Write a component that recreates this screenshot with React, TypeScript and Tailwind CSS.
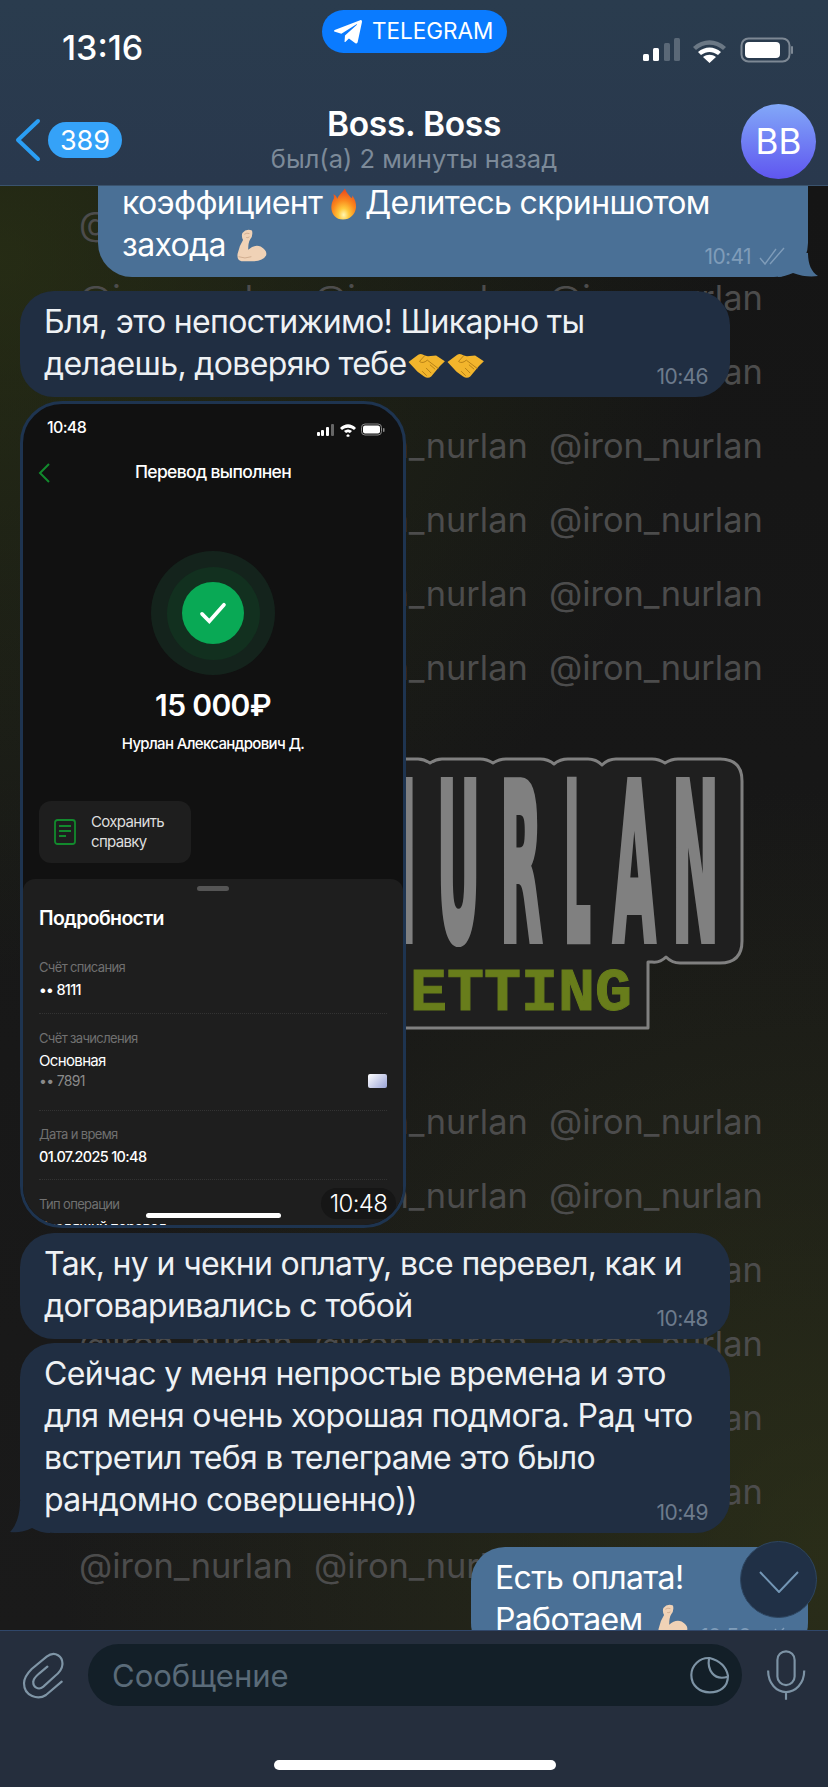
import { FaTelegramPlane } from "react-icons/fa";
import type { ReactNode } from "react";

function Flame() {
  return (
    <svg viewBox="35 15 80 98" className="inline-block h-[32px] w-[26px] align-[-6px]">
      <defs>
        <radialGradient id="flame" cx="0.5" cy="0.85" r="0.85">
          <stop offset="0" stopColor="#fff6b0" />
          <stop offset="0.25" stopColor="#ffc93c" />
          <stop offset="0.55" stopColor="#fb8a1e" />
          <stop offset="1" stopColor="#e8411c" />
        </radialGradient>
      </defs>
      <path d="M78 16c4 14 12 20 20 30 2-2 3-5 3-8 8 12 12 24 11 36-2 22-18 38-40 38S36 96 36 74c0-12 4-20 8-28 0-4 0-8-2-12 8 2 10 8 12 14 4-12 16-20 24-32z" fill="url(#flame)" />
    </svg>
  );
}

function Muscle({ className }: { className: string }) {
  return (
    <svg viewBox="28 15 100 105" className={className}>
      <path d="M48 30Q60 15 78 22 82 40 72 50 66 60 66 82 85 65 105 72 127 85 122 100 112 118 80 118L45 118Q30 115 33 95 38 70 50 52 44 40 48 30z" fill="#f0d2b6" />
      <path d="M54 34q8-6 16-2M60 44q5 2 10-2M36 104q20 8 40 0" stroke="#c9a487" strokeWidth="2.500" fill="none" />
    </svg>
  );
}

function Handshake() {
  return (
    <svg viewBox="0 0 114 80" className="ml-[1px] inline-block h-[26px] w-[38px] align-[-4px]">
      <path d="M0 28L30 5Q40 0 50 8L60 10 85 8 112 25 97 40 70 72Q60 80 48 72L28 58z" fill="#f2b52c" />
      <path d="M50 8L34 26Q44 34 58 22L92 48M42 56l14 14M54 46l16 16M66 36l16 14" stroke="#b67f16" strokeWidth="3" fill="none" />
    </svg>
  );
}

function Bubble({
  out,
  time,
  tail,
  className,
  children,
}: {
  out?: boolean;
  time: string;
  tail?: boolean;
  className: string;
  children: ReactNode;
}) {
  return (
    <div className={`relative rounded-[34px] ${out ? "bg-[#4a7096] text-white" : "bg-[#202e42] text-[#eef1f4]"} ${className}`}>
      {tail && out && (
        <svg viewBox="0 0 40 24" className="absolute right-[-10px] bottom-0 h-[24px] w-[40px]">
          <path d="M30 0C30 10 33 19 40 23 33 24 24 23.500 15 20 10 22 4 24 0 24L0 0z" fill="#4a7096" />
        </svg>
      )}
      {tail && !out && (
        <svg viewBox="0 0 40 32" className="absolute left-[-10px] bottom-0 h-[32px] w-[40px]">
          <path d="M10 0C10 12 7 24 0 31 7 32 14 31 22 27 27 30 34 32 40 32L40 0z" fill="#202e42" />
        </svg>
      )}
      <div className="relative">{children}</div>
      <div className={`absolute bottom-[8px] flex items-center gap-[8px] text-[21px] leading-[24px] tracking-[-0.6px] ${out ? "right-[23px] text-[#7f9cb9]" : "right-[22px] text-[#6d7b8c]"}`}>
        {time}
        {out && (
          <svg viewBox="0 0 26 20" className="h-[20px] w-[26px]" fill="none" stroke="#7f9cb9" strokeWidth="1.400">
            <path d="M1 11l5 6L17 2M11 17L25 1" />
          </svg>
        )}
      </div>
    </div>
  );
}

function Detail({ label, value, className }: { label: string; value: string; className: string }) {
  return (
    <div className={className}>
      <div className="text-[13px] leading-[18px] text-[#707070]">{label}</div>
      <div className="mt-[4px] text-[14.500px] leading-[20px] font-medium text-white">{value}</div>
    </div>
  );
}

function Dots() {
  return <div className="mx-[16px] border-t border-dotted border-[#333333]" />;
}

function PaymentShot() {
  return (
    <div className="relative ml-[20px] mt-[4px] h-[827px] w-[386px] shrink-0 overflow-hidden rounded-[42px] border-[3px] border-[#1e3450] bg-[#111111]">
      <div className="flex h-[34px] items-end justify-between pl-[24px] pr-[18px] pb-[1px]">
        <span className="text-[16px] leading-[20px] font-medium text-white">10:48</span>
        <svg viewBox="0 0 68 14" className="h-[14px] w-[68px]" fill="white">
          <rect x="0" y="9" width="3" height="4" rx="1" />
          <rect x="4" y="7" width="3" height="6" rx="1" />
          <rect x="9" y="4" width="3" height="9" rx="1" />
          <rect x="14" y="1" width="3" height="12" rx="1" fill="#666" />
          <path d="M23 5c5-5 11-5 16 0l-2 2c-4-3-8-3-12 0zM27 8c3-2 5-2 8 0l-2 2c-2-1-2-1-4 0zM31 11l2 2-2 1-2-1z" />
          <rect x="44.500" y="1" width="20" height="11" rx="3.500" fill="none" stroke="#888" />
          <rect x="46" y="2.500" width="17" height="8" rx="2" />
          <rect x="66" y="5" width="1.500" height="4" rx="0.700" fill="#888" />
        </svg>
      </div>
      <div className="relative mt-[23px] flex h-[22px] items-center justify-center text-[17.500px] font-medium text-white">
        <svg viewBox="0 0 12 20" className="absolute left-[15px] top-[2px] h-[20px] w-[12px]" fill="none" stroke="#128a2d" strokeWidth="2">
          <path d="M11 1L2 10l9 9" />
        </svg>
        Перевод выполнен
      </div>
      <div className="mt-[68px] flex justify-center">
        <div className="flex h-[124px] w-[124px] items-center justify-center rounded-full bg-[#14231c]">
          <div className="flex h-[93px] w-[93px] items-center justify-center rounded-full bg-[#12301f]">
            <div className="flex h-[62px] w-[62px] items-center justify-center rounded-full bg-[#09a955]">
              <svg viewBox="0 0 28 24" className="h-[22px] w-[28px]" fill="none" stroke="white" strokeWidth="4" strokeLinecap="round">
                <path d="M2 13l8 8L26 3" />
              </svg>
            </div>
          </div>
        </div>
      </div>
      <div className="mt-[11px] text-center text-[30px] leading-[38px] font-semibold text-white">15 000₽</div>
      <div className="mt-[10px] text-center text-[15px] leading-[20px] font-medium text-white">Нурлан Александрович Д.</div>
      <div className="mt-[47px] ml-[16px] flex h-[62px] w-[152px] items-center gap-[15px] rounded-[12px] bg-[#1e1e1e] pl-[15px]">
        <svg viewBox="0 0 22 26" className="h-[26px] w-[22px]" fill="none" stroke="#128a2d" strokeWidth="1.800">
          <rect x="1" y="1" width="20" height="24" rx="2.500" />
          <path d="M5 7h12M5 12h12M5 17h7" />
        </svg>
        <div className="text-[15px] leading-[20px] text-[#dddddd]">
          Сохранить
          <br />
          справку
        </div>
      </div>
      <div className="mt-[16px] h-[400px] rounded-t-[12px] bg-[#1e1e1e]">
        <div className="flex justify-center pt-[7px]">
          <div className="h-[5px] w-[32px] rounded-full bg-[#555555]" />
        </div>
        <div className="mt-[15px] px-[16px] text-[19.500px] leading-[24px] font-semibold text-white">Подробности</div>
        <Detail className="mt-[28px] px-[16px] pb-[13px]" label="Счёт списания" value="•• 8111" />
        <Dots />
        <div className="px-[16px] pt-[15px] pb-[19px]">
          <div className="text-[13px] leading-[18px] text-[#707070]">Счёт зачисления</div>
          <div className="mt-[4px] text-[15px] leading-[20px] text-white">Основная</div>
          <div className="flex items-center justify-between text-[14px] leading-[20px] text-[#8a8a8a]">
            •• 7891
            <div className="h-[14px] w-[19px] rounded-[2px] bg-[linear-gradient(135deg,#ffffff,#9aa4d8)]" />
          </div>
        </div>
        <Dots />
        <Detail className="mt-[14px] px-[16px] pb-[12px]" label="Дата и время" value="01.07.2025 10:48" />
        <Dots />
        <Detail className="mt-[15px] px-[16px]" label="Тип операции" value="Входящий перевод" />
      </div>
      <div className="absolute bottom-[7px] left-[123px] h-[5px] w-[135px] rounded-full bg-white" />
      <div className="absolute bottom-[6px] right-[7px] flex h-[31px] w-[75px] items-center justify-center rounded-full bg-[#161616] text-[24px] font-light text-white">10:48</div>
    </div>
  );
}

function WatermarkRow() {
  return (
    <div className="flex h-[74px] items-center pl-[79px] text-[34.400px] leading-none text-[#4c4c4c]">
      <span className="w-[235px] shrink-0">@iron_nurlan</span>
      <span className="w-[235px] shrink-0">@iron_nurlan</span>
      <span className="w-[235px] shrink-0">@iron_nurlan</span>
    </div>
  );
}

function Logo() {
  const letters: [string, number, number][] = [
    ["N", -8, 0.53],
    ["U", 57, 0.53],
    ["R", 120, 0.55],
    ["L", 184, 0.42],
    ["A", 233, 0.55],
    ["N", 292, 0.56],
  ];
  return (
    <svg viewBox="0 0 370 276" className="h-[276px] w-[370px]">
      <path
        d="M0 2H38Q44 2 50 6 56 2 62 2H100Q107 2 113 6 119 2 126 2H160Q168 2 174 7 180 2 188 2H208Q216 2 222 8 228 2 236 2H272Q279 2 285 6 291 2 298 2H340Q362 2 362 24V184Q362 206 340 206H300Q292 206 286 200 280 206 272 205H268V271H0z"
        fill="#1f1f1f"
        stroke="#808080"
        strokeWidth="3"
        strokeLinejoin="round"
      />
      {letters.map(([ch, x, sx]) => (
        <text
          key={x}
          transform={`translate(${x} 183) scale(${sx} 2.170)`}
          fontFamily="DejaVu Sans"
          fontWeight="700"
          fontSize="100"
          fill="#808080"
          stroke="#808080"
          strokeWidth="6"
          vectorEffect="non-scaling-stroke"
        >
          {ch}
        </text>
      ))}
      <text x="30" y="253" textLength="222" lengthAdjust="spacingAndGlyphs" fontFamily="Liberation Mono" fontWeight="700" fontSize="62" fill="#687d1b" stroke="#687d1b" strokeWidth="1">
        ETTING
      </text>
    </svg>
  );
}

function PaperclipIcon() {
  return (
    <svg viewBox="60 55 140 150" className="h-[50px] w-[46.700px]" fill="none" stroke="#7f95a6" strokeWidth="6.500" strokeLinecap="round">
      <path d="M185 150L138 190C115 205 72 195 72 155 72 135 85 122 95 112L140 75C165 55 190 75 187 100 186 115 175 125 165 133L130 165C115 178 98 165 100 150 100 140 110 132 118 125L142 105" />
    </svg>
  );
}

function StickerIcon() {
  return (
    <svg viewBox="20 40 130 125" className="h-[41.700px] w-[43.300px]" fill="none" stroke="#7d93a5" strokeWidth="6.500">
      <path d="M140 105C140 140 115 155 85 155 55 155 30 135 30 103 30 75 55 50 85 52 115 60 135 80 140 105z" />
      <path d="M83 54C78 85 95 122 140 108" />
    </svg>
  );
}

function MicIcon() {
  return (
    <svg viewBox="255 25 125 160" className="h-[53px] w-[41.700px]" fill="none" stroke="#7d93a5" strokeWidth="6.500">
      <rect x="292" y="32" width="52" height="102" rx="26" />
      <path d="M264 90C264 130 290 155 318 155 346 155 373 130 373 90M318 155V178" />
    </svg>
  );
}

export default function App() {
  return (
    <div className="relative flex h-[1787px] w-[828px] flex-col overflow-hidden bg-[#1a1a1a] font-['Inter',sans-serif] text-white">
      <header className="relative z-10 h-[186px] shrink-0 border-b border-[#3a536e] bg-[linear-gradient(180deg,#2a3c4e,#29384d)]">
        <div className="absolute left-[62px] top-[29px] text-[34px] leading-[38px] font-medium">13:16</div>
        <div className="absolute left-[322px] top-[10px] flex h-[43px] w-[185px] items-center rounded-full bg-[#0a7bff] pl-[10px]">
          <FaTelegramPlane className="h-[32px] w-[32px]" />
          <span className="ml-[8px] text-[22.500px] leading-none">TELEGRAM</span>
        </div>
        <svg viewBox="0 0 150 26" className="absolute left-[643px] top-[37px] h-[26px] w-[150px]" fill="white">
          <rect x="0" y="17" width="6" height="7" rx="1.500" />
          <rect x="10" y="11" width="6" height="13" rx="1.500" />
          <rect x="21" y="6" width="6" height="18" rx="1.500" fill="#5a6877" />
          <rect x="31" y="1" width="6" height="23" rx="1.500" fill="#5a6877" />
          <path d="M50 10c10-9 23-9 33 0l-3 3c-8-7-19-7-27 0z" fill="#6b7885" />
          <path d="M55 15c7-6 16-6 23 0l-3 3c-6-4-11-4-17 0zM60 20c4-3 9-3 13 0l-6.500 6z" />
          <rect x="98.500" y="1.500" width="48" height="23" rx="7" fill="none" stroke="#7d8894" strokeWidth="2" />
          <rect x="102" y="5" width="35" height="16" rx="4" />
          <rect x="148" y="9" width="2" height="8" rx="1" fill="#7d8894" />
        </svg>
        <svg viewBox="0 0 26 44" className="absolute left-[15px] top-[118px] h-[44px] w-[26px]" fill="none" stroke="#2a9ef4" strokeWidth="4" strokeLinecap="round" strokeLinejoin="round">
          <path d="M23 3L3 22l20 19" />
        </svg>
        <div className="absolute left-[48px] top-[122px] flex h-[36px] w-[74px] items-center justify-center rounded-full bg-[#35a2f8] text-[27px] leading-none">389</div>
        <div className="flex flex-col items-center pt-[103px]">
          <div className="text-[33.500px] leading-[42px] font-semibold tracking-[-0.3px]">Boss. Boss</div>
          <div className="text-[25.500px] leading-[28px] text-[#7c8a99]">был(а) 2 минуты назад</div>
        </div>
        <div className="absolute left-[741px] top-[104px] flex h-[75px] w-[75px] items-center justify-center rounded-full bg-[linear-gradient(180deg,#82a8f8,#5f56f0)] text-[35px] leading-none">BB</div>
      </header>

      <main className="relative flex min-h-0 flex-1 flex-col overflow-hidden bg-[radial-gradient(circle_at_0%_5%,#36421480_0%,#33401440_22%,transparent_45%),radial-gradient(circle_at_100%_95%,#3a411880_0%,#363c1640_25%,transparent_48%),linear-gradient(180deg,#151515,#1a1a1a)]">
        <div className="absolute inset-x-0 top-[1px]">
          <WatermarkRow />
          <WatermarkRow />
          <WatermarkRow />
          <WatermarkRow />
          <WatermarkRow />
          <WatermarkRow />
          <WatermarkRow />
          <div className="flex h-[380px] items-center pl-[380px]">
            <Logo />
          </div>
          <WatermarkRow />
          <WatermarkRow />
          <WatermarkRow />
          <WatermarkRow />
          <WatermarkRow />
          <WatermarkRow />
          <WatermarkRow />
        </div>

        <div className="relative flex flex-col text-[32px] leading-[42px] tracking-[-0.65px]">
          <Bubble out tail time="10:41" className="ml-[98px] mt-[-44px] w-[710px] pl-[24px] pt-[40px] pb-[11px]">
            коэффициент <Flame /> Делитесь скриншотом
            <br />
            захода
            <Muscle className="ml-[10px] inline-block h-[34px] w-[32px] align-[-6px]" />
          </Bubble>
          <Bubble time="10:46" className="ml-[20px] mt-[14px] w-[710px] pl-[24px] pt-[10px] pb-[12px]">
            Бля, это непостижимо! Шикарно ты
            <br />
            делаешь, доверяю тебе
            <Handshake />
            <Handshake />
          </Bubble>
          <PaymentShot />
          <Bubble time="10:48" className="ml-[20px] mt-[5px] w-[710px] pl-[24px] pt-[10px] pb-[12px]">
            Так, ну и чекни оплату, все перевел, как и
            <br />
            договаривались с тобой
          </Bubble>
          <Bubble tail time="10:49" className="ml-[20px] mt-[4px] w-[710px] pl-[24px] pt-[10px] pb-[12px]">
            Сейчас у меня непростые времена и это
            <br />
            для меня очень хорошая подмога. Рад что
            <br />
            встретил тебя в телеграме это было
            <br />
            рандомно совершенно))
          </Bubble>
          <Bubble out time="10:50" className="ml-[471px] mt-[14px] w-[337px] pl-[24px] pt-[10px] pb-[16px]">
            Есть оплата!
            <br />
            Работаем
            <Muscle className="ml-[14px] inline-block h-[34px] w-[32px] align-[-6px]" />
          </Bubble>
        </div>

        <div className="absolute left-[740px] top-[1355px] flex h-[77px] w-[77px] items-center justify-center rounded-full border border-[#2d4560] bg-[#203046]">
          <svg viewBox="0 0 40 22" className="mt-[4px] h-[22px] w-[40px]" fill="none" stroke="#7396b5" strokeWidth="2">
            <path d="M1 1l19 20L39 1" />
          </svg>
        </div>
      </main>

      <footer className="relative z-10 h-[157px] shrink-0 border-t border-[#30476a] bg-[#252e3d]">
        <div className="flex items-center pt-[13px]">
          <div className="ml-[20px] w-[48px]">
            <PaperclipIcon />
          </div>
          <div className="ml-[20px] flex h-[62px] w-[654px] items-center justify-between rounded-full bg-[#131f28] pl-[24px] pr-[11px] text-[31px] leading-none text-[#5a6b79]">
            Сообщение
            <StickerIcon />
          </div>
          <div className="ml-[23px]">
            <MicIcon />
          </div>
        </div>
        <div className="absolute bottom-[17px] left-[274px] h-[10px] w-[282px] rounded-full bg-white" />
      </footer>
    </div>
  );
}
